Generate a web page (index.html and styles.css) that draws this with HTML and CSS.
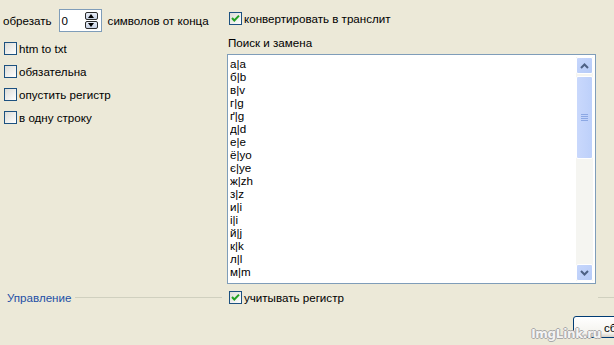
FILE: index.html
```html
<!DOCTYPE html>
<html lang="ru">
<head>
  <meta charset="UTF-8">
  <title>Транслит</title>
  <link rel="stylesheet" href="styles.css">
</head>
<body>

<div class="window">

  <div class="main">
    <div class="left">
      <div class="trim-row">
        <span>обрезать</span>
        <div class="spin-edit">
          <span class="spin-value">0</span>
          <div class="spin-btns">
            <span class="spin-btn up"></span>
            <span class="spin-btn down"></span>
          </div>
        </div>
        <span>символов от конца</span>
      </div>
      <label class="check"><span class="box"></span>htm to txt</label>
      <label class="check"><span class="box"></span>обязательна</label>
      <label class="check"><span class="box"></span>опустить регистр</label>
      <label class="check"><span class="box"></span>в одну строку</label>
    </div>

    <div class="right">
      <label class="check top-check"><span class="box checked"></span>конвертировать в транслит</label>
      <div class="caption">Поиск и замена</div>
      <div class="listbox">
        <div class="lines" id="lines"></div>
        <div class="vscroll">
          <span class="sb-btn"><svg width="9" height="6" viewBox="0 0 9 6"><path d="M1 5 L4.5 1.5 L8 5" fill="none" stroke="#4d6185" stroke-width="2"/></svg></span>
          <span class="sb-thumb"><i></i><i></i><i></i><i></i></span>
          <span class="sb-track"></span>
          <span class="sb-btn"><svg width="9" height="6" viewBox="0 0 9 6"><path d="M1 1 L4.5 4.5 L8 1" fill="none" stroke="#4d6185" stroke-width="2"/></svg></span>
        </div>
      </div>
    </div>
  </div>

  <div class="footer-row">
    <div class="group-title"><span>Управление</span><span class="rule"></span></div>
    <label class="check"><span class="box checked"></span>учитывать регистр</label>
    <span class="spacer"></span>
    <span class="rule end"></span>
  </div>

  <div class="buttons">
    <button class="btn">сброс</button>
  </div>

  <div class="watermark">ImgLink.ru</div>
</div>

<script>
  const pairs = [
    'а|a','б|b','в|v','г|g','ґ|g','д|d','е|e','ё|yo','є|ye','ж|zh',
    'з|z','и|i','і|i','й|j','к|k','л|l','м|m','н|n'
  ];
  const box = document.getElementById('lines');
  pairs.forEach(p => {
    const row = document.createElement('div');
    row.className = 'line';
    row.textContent = p;
    box.appendChild(row);
  });
</script>

</body>
</html>
```

FILE: styles.css
```css
:root {
  --xp-bg:     #ECE9D8;
  --xp-edge:   #7F9DB9;
  --xp-check:  #1C5180;
  --xp-group:  #D0D0BF;
  --xp-blue:   #1D4FA6;
}

* { box-sizing: border-box; }

html, body {
  margin: 0;
  overflow: hidden;
}

body {
  background: var(--xp-bg);
  color: #000;
  font-family: 'Liberation Sans', Arial, sans-serif;
  font-size: 11.6px;
}

.window {
  width: 614px; height: 345px;
  position: relative;
}

.main { display: flex; }

.left {
  width: 227px;
  display: flex; flex-direction: column;
  gap: 10px;
}

.trim-row {
  display: flex; align-items: center;
  height: 23px; margin-top: 9px;
  padding-left: 3px;
}

.spin-edit {
  width: 43px; height: 23px;
  margin: 0 6px 0 7px;
  border: 1px solid var(--xp-edge);
  background: #FFF;
  display: flex; align-items: center;
  justify-content: space-between;
  padding: 0 3px 0 2px;
}

.spin-btns {
  display: flex; flex-direction: column;
  gap: 1px;
}

.spin-btn {
  width: 13px; height: 8px;
  border: 1px solid #2b2b2b;
  border-radius: 2px;
  background: linear-gradient(#e8eef8, #c8d2e4);
  position: relative;
}

.spin-btn::after {
  content: '';
  position: absolute; left: 2px;
  border-left: 3.5px solid transparent;
  border-right: 3.5px solid transparent;
}

.spin-btn.up::after   { top: 1px; border-bottom: 4px solid #000; }
.spin-btn.down::after { top: 1px; border-top: 4px solid #000; }

.check {
  display: flex; align-items: center;
  height: 13px; padding-left: 4px;
  white-space: nowrap;
}

.box {
  width: 13px; height: 13px;
  margin-right: 2px; flex: none;
  border: 1px solid var(--xp-check);
  background: linear-gradient(135deg, #DCDCD7, #FFF);
}

.box.checked {
  background:
    url("data:image/svg+xml,%3Csvg xmlns='http://www.w3.org/2000/svg' width='11' height='11'%3E%3Cpath d='M2 5 L4.3 7.5 L9 2.6' fill='none' stroke='%2321A121' stroke-width='2'/%3E%3C/svg%3E") center/11px no-repeat,
    linear-gradient(135deg, #DCDCD7, #FFF);
}

.right { width: 369px; }

.top-check { margin-top: 12px; padding-left: 2px; }

.caption {
  line-height: 14px;
  margin: 11px 0 4px 1px;
}

.listbox {
  height: 230px;
  border: 1px solid var(--xp-edge);
  background: #FFF;
  display: flex;
  padding: 2px;
}

.lines {
  flex: 1;
  overflow: hidden;
}

.line {
  line-height: 13px; height: 13px;
  white-space: nowrap;
}

.vscroll {
  width: 17px; flex: none;
  display: flex; flex-direction: column;
  background: #F5F5F1;
}

.sb-btn {
  height: 17px; flex: none;
  border: 1px solid #FFF;
  border-radius: 2px;
  background: linear-gradient(135deg, #C6D6FC, #B6CBF7);
  display: flex; align-items: center; justify-content: center;
}

.sb-thumb {
  height: 83px; margin-top: 2px; flex: none;
  border: 1px solid #FFF;
  border-radius: 2px;
  background: linear-gradient(90deg, #C9D8FC, #BDD0FA);
  display: flex; flex-direction: column;
  align-items: center; justify-content: center;
  gap: 1px;
}

.sb-thumb i {
  width: 7px; height: 1px;
  background: #EEF3FE;
  border-bottom: 1px solid #8CA8E4;
}

.sb-track { flex: 1; }

.footer-row {
  display: flex; align-items: center;
  margin-top: 7px; height: 13px;
}

.group-title {
  width: 227px;
  display: flex; align-items: center;
  padding-left: 7px;
  color: var(--xp-blue);
}

.rule {
  height: 1px;
  background: var(--xp-group);
}

.group-title .rule {
  flex: 1;
  margin: 0 5px 0 4px;
}

.footer-row .check { padding-left: 2px; }

.spacer { flex: 1; }

.rule.end { width: 16px; margin-top: -1px; }

.buttons {
  display: flex; justify-content: flex-end;
  margin: 12px -52px 0 0;
}

.btn {
  width: 93px; height: 22px;
  border: 1px solid #003C74;
  border-radius: 3px;
  background: linear-gradient(#FFF, #F4F3EE 80%, #D6D0C5);
  font: inherit; color: #000;
  padding: 0;
}

.watermark {
  position: absolute;
  right: 13px; bottom: 4px;
  font: bold 12px 'DejaVu Sans', sans-serif;
  color: #F4F4F4;
  text-shadow: 1px 0 #A8A8A8, -1px 0 #A8A8A8, 0 1px #A8A8A8, 0 -1px #A8A8A8;
  letter-spacing: -0.3px;
}
```
